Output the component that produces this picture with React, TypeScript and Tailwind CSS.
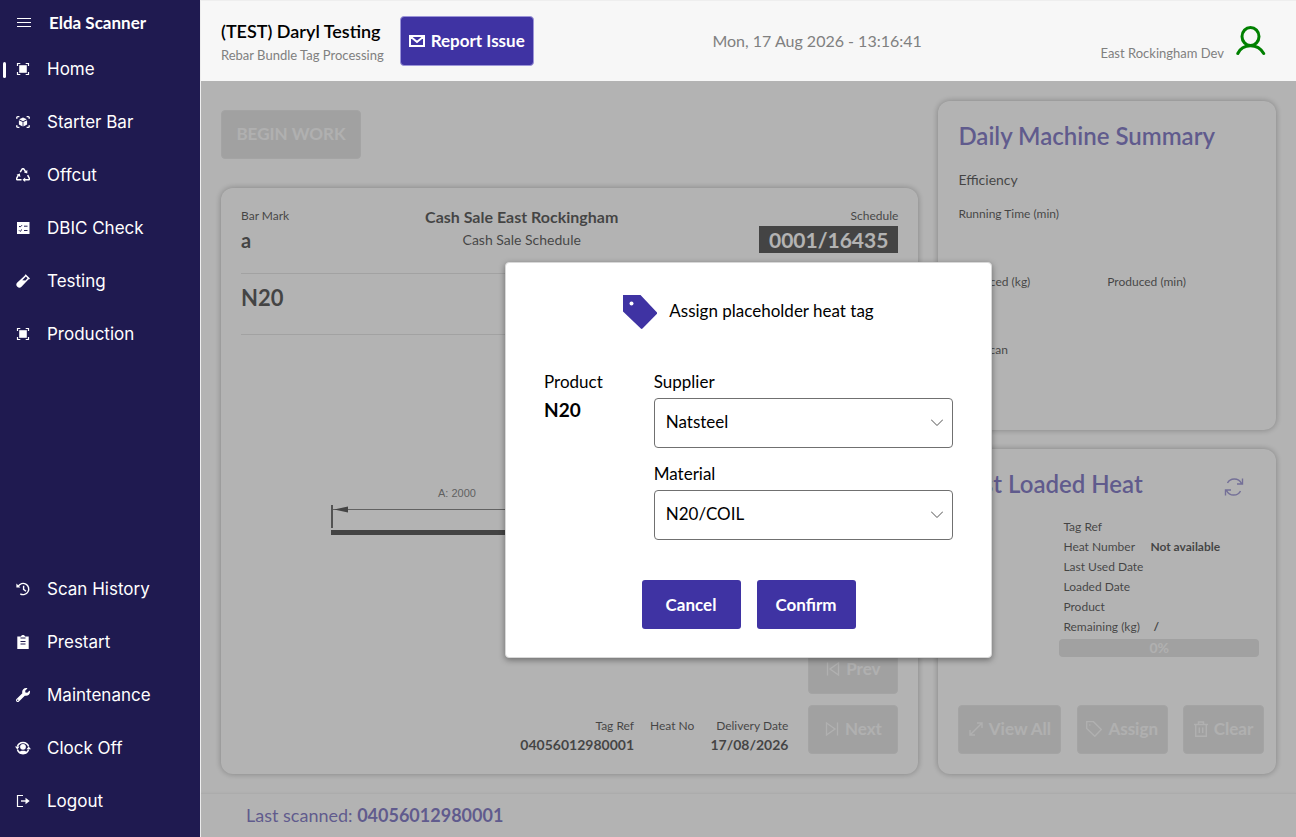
import React, { useState } from 'react';
import clsx from 'clsx';
import { FaWrench } from 'react-icons/fa';

interface NavItem {
  label: string;
  icon: React.ReactNode;
}

const ScanSquareIcon = () => (
  <svg className="h-3.5 w-3.5" viewBox="0 0 14 14" fill="none" stroke="currentColor" strokeWidth="1.2">
    <path d="M1.500 4V1.500h2.800M9.700 1.500h2.800V4M12.500 10v2.500H9.700M4.300 12.500H1.500V10" />
    <rect x="3.200" y="3.200" width="7.600" height="7.600" fill="currentColor" stroke="none" />
  </svg>
);

const ScanCubeIcon = () => (
  <svg className="h-3.5 w-3.5" viewBox="0 0 14 14" fill="none" stroke="currentColor" strokeWidth="1.4">
    <path d="M.8 3.8V2.6a1 1 0 0 1 1-1h1.6M10.6 1.6h1.6a1 1 0 0 1 1 1v1.2M13.2 10.2v1.2a1 1 0 0 1-1 1h-1.6M3.4 12.4H1.8a1 1 0 0 1-1-1v-1.2" />
    <path d="M7 2.4 10.8 4.3 7 6.2 3.2 4.3zM2.9 5.2l3.7 1.8v4.5L2.9 9.6zM11.1 5.2 7.4 7v4.5l3.7-1.9z" fill="currentColor" stroke="none" />
  </svg>
);

const RecycleIcon = () => (
  <svg className="h-3.5 w-3.5" viewBox="0 0 14 14" fill="none" stroke="currentColor" strokeWidth="1.5">
    <path d="M4.200 4.200 5.900 1.300q.4-.600 1.100-.600t1.100.600l1.600 2.700M11.600 7.200l1.500 2.600q.9 2-1.100 2H8.500M5.500 11.800H2q-2 0-1.100-2l1.300-2.400" />
    <path d="M11.300 2.100v3.500L8 4.400zM9.200 9.500v4.500L6.500 11.800zM.5 6.800l3.300-1.400.6 3.700z" fill="currentColor" stroke="none" />
  </svg>
);

const ChecklistIcon = () => (
  <svg className="h-3.5 w-3.5" viewBox="0 0 14 14" fill="none">
    <rect x="1" y="1" width="12.5" height="12" fill="currentColor" />
    <path d="m3 5 1.1 1.1L6 4.2M3 9.3l1.1 1.1L6 8.500M8 5.200h3.500M8 9.500h3.500" stroke="#1f1a50" strokeWidth="1" />
  </svg>
);

const TubeIcon = () => (
  <svg className="h-3.5 w-3.5" viewBox="0 0 14 14" fill="currentColor">
    <path d="M9.700.2 14 4.500l-1 1-.4-.3-7.100 7.500a2.900 2.900 0 0 1-4.200-4.100L8.900 1.500 8.700 1.200zM9.900 2.600 6.300 6.300l3.100.2 2.100-2.300z" fillRule="evenodd" />
  </svg>
);

const HistoryIcon = () => (
  <svg className="h-3.5 w-3.5" viewBox="0 0 14 14" fill="none" stroke="currentColor" strokeWidth="1.400">
    <path d="M2.200 4.300A5.600 5.600 0 1 1 4.300 11.800" />
    <path d="M7.600 3.800v3.600l2.400 1.800" />
    <path d="M.4 1.600v4h4z" fill="currentColor" stroke="none" />
  </svg>
);

const ClipboardIcon = () => (
  <svg className="h-3.5 w-3.5" viewBox="0 0 14 14">
    <path d="M1.300 1.500h3.600a2.200 2.200 0 0 1 4.200 0h3.600V14H1.300z" fill="currentColor" />
    <path d="M4.500 3h5M4.500 6.500h5M4.500 9h5" stroke="#1f1a50" strokeWidth="1.1" />
  </svg>
);

const ClockOffIcon = () => (
  <svg className="h-4 w-4" viewBox="0 0 16 16" fill="none" stroke="currentColor" strokeWidth="1.500">
    <path d="M2.400 6.500a5.900 5.900 0 0 1 11.200 0M13.600 9.500a5.900 5.900 0 0 1-11.200 0" />
    <path d="M0 6.500h4.600L2.300 9.400zM16 9.300h-4.600l2.300-2.900z" fill="currentColor" stroke="none" />
    <circle cx="8" cy="6.800" r="2.900" fill="currentColor" stroke="none" />
    <path d="M3.800 12.500c1-2.400 7.400-2.400 8.400 0-2 2.400-6.400 2.400-8.400 0z" fill="currentColor" stroke="none" />
  </svg>
);

const LogoutIcon = () => (
  <svg className="h-3.5 w-3.5" viewBox="0 0 14 14" fill="none" stroke="currentColor">
    <path d="M7 1.500H1.500v11H7" strokeWidth="1.200" />
    <path d="M5 7h5" strokeWidth="1.400" />
    <path d="M9.500 3.800 13.700 7l-4.200 3.200z" fill="currentColor" stroke="none" />
  </svg>
);

const mainNav: NavItem[] = [
  { label: 'Home', icon: <ScanSquareIcon /> },
  { label: 'Starter Bar', icon: <ScanCubeIcon /> },
  { label: 'Offcut', icon: <RecycleIcon /> },
  { label: 'DBIC Check', icon: <ChecklistIcon /> },
  { label: 'Testing', icon: <TubeIcon /> },
  { label: 'Production', icon: <ScanSquareIcon /> },
];

const footerNav: NavItem[] = [
  { label: 'Scan History', icon: <HistoryIcon /> },
  { label: 'Prestart', icon: <ClipboardIcon /> },
  { label: 'Maintenance', icon: <FaWrench className="h-3.5 w-3.5" /> },
  { label: 'Clock Off', icon: <ClockOffIcon /> },
  { label: 'Logout', icon: <LogoutIcon /> },
];

const NavList: React.FC<{ items: NavItem[]; active?: string }> = ({ items, active }) => (
  <ul>
    {items.map((item) => (
      <li key={item.label}>
        <a href="#" className="flex h-[53px] items-center pl-[3px] text-[17px]">
          <span className={clsx('h-4 w-[3px] rounded-full', item.label === active && 'bg-white')} />
          <span className="ml-2 flex w-[18px] justify-center pb-0.5">{item.icon}</span>
          <span className="ml-[15px]">{item.label}</span>
        </a>
      </li>
    ))}
  </ul>
);

const Sidebar = () => (
  <nav className="flex w-[200px] shrink-0 flex-col bg-[#1f1a50] pb-[9px] font-['Inter',sans-serif] text-white">
    <div className="flex h-[43px] items-center pt-0.5 pl-[17px]">
      <button type="button" aria-label="Toggle menu" className="flex w-3.5 flex-col gap-[3px]">
        <span className="h-px bg-white" />
        <span className="h-px bg-white" />
        <span className="h-px bg-white" />
      </button>
      <span className="ml-[18px] font-['Lato',sans-serif] text-[17px] font-bold">Elda Scanner</span>
    </div>
    <NavList items={mainNav} active="Home" />
    <div className="flex-1" />
    <NavList items={footerNav} />
  </nav>
);

const Header = () => (
  <header className="flex h-[81px] items-center justify-between border-t border-[#eeeeee] bg-[#f7f7f7] pr-[30px] pl-5">
    <div className="flex items-center gap-4">
      <div className="pt-1">
        <h1 className="text-[18px] leading-6 font-semibold">(TEST) Daryl Testing</h1>
        <p className="text-[13px] leading-6 text-[#808080]">Rebar Bundle Tag Processing</p>
      </div>
      <button type="button" className="flex h-[50px] items-center gap-1.5 rounded border border-[#9c95d8] bg-[#3f33a3] px-2 text-[17px] font-bold text-white">
        <svg className="h-3 w-4" viewBox="0 0 16 12" fill="none" stroke="currentColor" strokeWidth="2">
          <path d="M1 1h14v10H1zM1.500 1.500 8 7l6.500-5.500" />
        </svg>
        Report Issue
      </button>
    </div>
    <time className="text-[16px] text-[#808080]">Mon, 17 Aug 2026 - 13:16:41</time>
    <div className="flex items-center gap-3">
      <span className="pt-[26px] text-[13px] text-[#808080]">East Rockingham Dev</span>
      <svg className="h-[30px] w-[30px]" viewBox="0 0 30 30" fill="none" stroke="#008000" strokeWidth="3" strokeLinecap="round">
        <ellipse cx="14.500" cy="10.500" rx="8.500" ry="9" />
        <path d="M1.800 27.500C4 22.800 8 19.800 14.500 19.800s10.500 3 13.200 7.700" />
      </svg>
    </div>
  </header>
);

const DisabledButton: React.FC<{ children: React.ReactNode; className?: string }> = ({ children, className }) => (
  <button
    type="button"
    disabled
    className={clsx(
      'flex h-[49px] items-center justify-center gap-1.5 rounded border border-[#d6d6d6] bg-[#cecece] pb-0.5 text-[17px] font-bold text-[#f0f0f0]',
      className
    )}
  >
    {children}
  </button>
);

const ShapeDrawing = () => (
  <svg className="ml-[88px] h-14 w-64" viewBox="0 0 256 56" role="img" aria-label="Bar shape">
    <text x="128" y="12" textAnchor="middle" fill="#3c3c3c" className="font-['Liberation_Sans',sans-serif] text-[11px]">A: 2000</text>
    <path d="M3 20v23M253 20v23" stroke="#222222" strokeWidth="2" />
    <path d="M4 24.500h248" stroke="#444444" strokeWidth="1" />
    <path d="M5 24.500l14-3v6zM251 24.500l-14-3v6z" fill="#000000" />
    <path d="M2 47.500h252" stroke="#000000" strokeWidth="5" />
  </svg>
);

const card = 'rounded-xl bg-[#f7f7f7] shadow-[0_0_6px_rgba(0,0,0,0.45)]';

const BarCard = () => (
  <section className={clsx(card, 'flex flex-1 flex-col p-5')}>
    <div className="grid grid-cols-[1fr_auto_1fr] border-b border-[#d0d0d0] pb-[17px]">
      <div>
        <p className="text-[12px] leading-4">Bar Mark</p>
        <p className="text-[20px] leading-8 font-bold">a</p>
      </div>
      <div className="flex flex-col items-center pr-24">
        <p className="text-[16px] leading-[18px] font-bold">Cash Sale East Rockingham</p>
        <p className="pt-0.5 text-[14px] leading-6">Cash Sale Schedule</p>
      </div>
      <div className="flex flex-col items-end">
        <p className="text-[12px] leading-4">Schedule</p>
        <p className="mt-0.5 bg-black px-2.5 text-[21px] leading-[27px] font-bold text-[#f7f7f7]">0001/16435</p>
      </div>
    </div>
    <p className="border-b border-[#d0d0d0] pt-2 pb-5 text-[22px] leading-8 font-bold">N20</p>
    <div className="flex flex-1 flex-col pt-[150px]">
      <ShapeDrawing />
    </div>
    <div className="flex items-end justify-end gap-5">
      <dl className="flex gap-4 text-right">
        <div>
          <dt className="text-[12px] leading-5">Tag Ref</dt>
          <dd className="text-[14px] leading-[18px] font-bold">04056012980001</dd>
        </div>
        <div>
          <dt className="text-[12px] leading-5">Heat No</dt>
          <dd />
        </div>
        <div>
          <dt className="text-[12px] leading-5">Delivery Date</dt>
          <dd className="text-[14px] leading-[18px] font-bold">17/08/2026</dd>
        </div>
      </dl>
      <div className="flex w-[90px] flex-col gap-[11px]">
        <DisabledButton>
          <svg className="h-3.5 w-3.5" viewBox="0 0 14 14" fill="none" stroke="currentColor" strokeWidth="1.300">
            <path d="M1.500.5v13M12.500 1v12L4 7z" />
          </svg>
          Prev
        </DisabledButton>
        <DisabledButton>
          <svg className="h-3.5 w-3.5" viewBox="0 0 14 14" fill="none" stroke="currentColor" strokeWidth="1.300">
            <path d="M12.500.5v13M1.500 1v12L10 7z" />
          </svg>
          Next
        </DisabledButton>
      </div>
    </div>
  </section>
);

const SummaryCard = () => (
  <section className={clsx(card, 'h-[329px] px-5 pt-[19px]')}>
    <h2 className="text-[24px] leading-8 font-semibold text-[#3f33a3]">Daily Machine Summary</h2>
    <p className="mt-4 text-[14px] leading-6">Efficiency</p>
    <p className="mt-3 text-[12px] leading-5">Running Time (min)</p>
    <div className="mt-12 grid grid-cols-2 text-[12px] leading-5">
      <p>Produced (kg)</p>
      <p>Produced (min)</p>
    </div>
    <p className="mt-12 text-[12px] leading-5">Last Scan</p>
  </section>
);

const heatRows = [
  ['Tag Ref', ''],
  ['Heat Number', 'Not available'],
  ['Last Used Date', ''],
  ['Loaded Date', ''],
  ['Product', ''],
  ['Remaining (kg)', ' / '],
];

const LoadedHeatCard = () => (
  <section className={clsx(card, 'flex flex-1 flex-col pt-[19px] pr-3 pb-5 pl-5')}>
    <div className="flex items-center justify-between pr-5">
      <h2 className="text-[24px] leading-8 font-semibold text-[#3f33a3]">Last Loaded Heat</h2>
      <button type="button" aria-label="Refresh">
        <svg className="mt-1.5 h-5 w-5" viewBox="0 0 20 20" fill="none" stroke="#6a61b8" strokeWidth="1.400">
          <path d="M3.500 6C6 .8 14.500.2 17.500 6.500M18.500 1.500V7h-5.500M16.500 14C14 19.200 5.500 19.800 2.500 13.500M1.500 18.500V13H7" />
        </svg>
      </button>
    </div>
    <table className="mt-[17px] ml-[105px] text-[12px] leading-5">
      <tbody>
        {heatRows.map(([label, value]) => (
          <tr key={label}>
            <th scope="row" className="w-[87px] p-0 text-left font-normal">{label}</th>
            <td className={clsx('p-0 font-bold', value === ' / ' && 'pl-[3px]')}>{value}</td>
          </tr>
        ))}
      </tbody>
    </table>
    <div className="mt-0.5 mr-[5px] ml-[101px] rounded bg-[#cecece] text-center text-[14px] leading-[18px] font-bold text-[#f0f0f0]">0%</div>
    <div className="mt-auto flex justify-between">
      <DisabledButton className="w-[103px]">
        <svg className="h-3.5 w-3.5" viewBox="0 0 14 14" fill="none" stroke="currentColor" strokeWidth="1.300">
          <path d="M1 13 13 1M8 1h5v5M1 8v5h5" />
        </svg>
        View All
      </DisabledButton>
      <DisabledButton className="w-[91px]">
        <svg className="h-4 w-4" viewBox="0 0 16 16" fill="none" stroke="currentColor" strokeWidth="1.300">
          <path d="M.7.700h6.800L15.300 8.500l-6.500 6.800L.7 7.500z" />
          <circle cx="3.800" cy="4" r=".8" fill="currentColor" stroke="none" />
        </svg>
        Assign
      </DisabledButton>
      <DisabledButton className="w-[81px]">
        <svg className="h-4 w-3.5" viewBox="0 0 14 16" fill="none" stroke="currentColor" strokeWidth="1.400">
          <path d="M0 3.500h14M4.500 3V1h5v2M1.700 3.500v11.700h10.600V3.500M5.300 6.500v5.500M8.700 6.500v5.500" />
        </svg>
        Clear
      </DisabledButton>
    </div>
  </section>
);

interface SelectFieldProps {
  id: string;
  label: string;
  value: string;
  options: string[];
  onChange: (value: string) => void;
}

const SelectField: React.FC<SelectFieldProps> = ({ id, label, value, options, onChange }) => (
  <div>
    <label htmlFor={id} className="block text-[17px] leading-[22px]">{label}</label>
    <div className="relative mt-[5px]">
      <select
        id={id}
        value={value}
        onChange={(e) => onChange(e.target.value)}
        className="h-[50px] w-full appearance-none rounded border border-[#707070] bg-white px-[11px] pb-0.5 text-[17px]"
      >
        {options.map((option) => (
          <option key={option}>{option}</option>
        ))}
      </select>
      <svg className="pointer-events-none absolute top-[19px] right-2.5 h-3 w-3" viewBox="0 0 12 12" fill="none" stroke="#505050">
        <path d="M0 2.500 6 8.500l6-6" />
      </svg>
    </div>
  </div>
);

const AssignTagDialog = () => {
  const [supplier, setSupplier] = useState('Natsteel');
  const [material, setMaterial] = useState('N20/COIL');

  return (
    <div role="dialog" aria-labelledby="assign-title" className="w-[487px] rounded-sm border border-[#d8d8d8] bg-white px-[38px] pt-8 pb-7 shadow-[0_2px_6px_rgba(0,0,0,0.4)]">
      <div className="flex items-center justify-center gap-3">
        <svg className="h-[34px] w-[34px]" viewBox="0 0 34 34">
          <path d="M0 0h17.500L34 17.500c.3.500.3.900 0 1.200L19.500 33.500c-.5.500-1.200.5-1.700 0L0 16.500z" fill="#3f33a3" />
          <circle cx="8.500" cy="8.500" r="2" fill="#ffffff" />
        </svg>
        <h2 id="assign-title" className="pb-0.5 text-[17px]">Assign placeholder heat tag</h2>
      </div>
      <div className="mt-[42px] flex">
        <div className="w-[110px]">
          <p className="text-[17px] leading-[22px]">Product</p>
          <p className="mt-1.5 text-[19px] leading-[22px] font-bold">N20</p>
        </div>
        <div className="flex w-[300px] flex-col gap-[15px]">
          <SelectField id="supplier" label="Supplier" value={supplier} options={['Natsteel']} onChange={setSupplier} />
          <SelectField id="material" label="Material" value={material} options={['N20/COIL']} onChange={setMaterial} />
        </div>
      </div>
      <div className="mt-10 flex justify-center gap-4 text-[17px] font-bold text-white">
        <button type="button" className="h-[49px] w-[99px] rounded-[3px] bg-[#3f33a3]">Cancel</button>
        <button type="button" className="h-[49px] w-[99px] rounded-[3px] bg-[#3f33a3]">Confirm</button>
      </div>
    </div>
  );
};

export default function App() {
  return (
    <div className="flex min-h-screen font-['Lato',sans-serif] text-black">
      <Sidebar />
      <div className="flex min-w-0 flex-1 flex-col border-l border-[#eeeeee]">
        <Header />
        <main className="relative flex flex-1 flex-col bg-[#f7f7f7]">
          <div className="flex flex-1 gap-5 px-5 pt-5 pb-[19px]">
            <div className="flex flex-1 flex-col">
              <div className="pt-[9px] pb-[29px]">
                <DisabledButton className="w-[140px]">BEGIN WORK</DisabledButton>
              </div>
              <BarCard />
            </div>
            <div className="flex w-[32%] flex-col gap-[19px]">
              <SummaryCard />
              <LoadedHeatCard />
            </div>
          </div>
          <footer className="flex h-11 items-center border-t border-[#e6e6e6] pl-[45px] text-[18px] text-[#3f33a3] shadow-[0_-1px_2px_rgba(0,0,0,0.05)]">
            Last scanned:&nbsp;<strong className="font-bold">04056012980001</strong>
          </footer>
          {/* Dialog overlay */}
          <div className="absolute inset-0 flex items-center justify-center bg-[#7c7c7c]/55 pt-0.5">
            <AssignTagDialog />
          </div>
        </main>
      </div>
    </div>
  );
}
